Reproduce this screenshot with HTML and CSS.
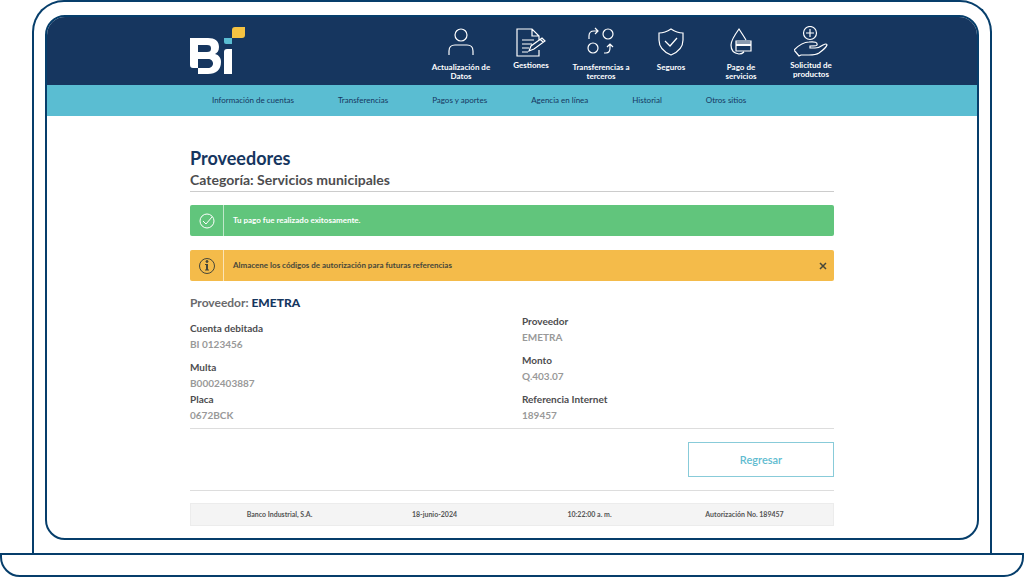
FILE: index.html
```html
<!DOCTYPE html>
<html lang="es">
<head>
<meta charset="utf-8">
<meta name="viewport" content="width=device-width, initial-scale=1">
<title>Proveedores</title>
<link rel="stylesheet" href="styles.css">
</head>
<body>
<div class="lid">
  <div class="screen">
    <header class="header">
      <div class="header-inner">
        <a class="logo" href="#" aria-label="Bi">
          <svg width="56" height="48" viewBox="0 0 56 48">
            <path fill="#fff" fill-rule="evenodd" d="M0 11H18C25 11 29 14 29 20C29 24 27 26 25 27C29 28 31 31 31 35C31 43 26 47 18 47H8V41H3Q0 41 0 38ZM8 18V25H17C20 25 21 24 21 21.500C21 19 20 18 17 18ZM8 32V41H18C21 41 23 39 23 36.500C23 34 21 32 18 32Z"/>
            <path fill="#fff" d="M37 22H42V47H34V25Q34 22 37 22Z"/>
            <path fill="#5abdd2" d="M34 11H42V17H36Q34 17 34 15Z"/>
            <path fill="#f5c342" d="M45 0H55V8Q55 11 52 11H42V3Q42 0 45 0Z"/>
          </svg>
        </a>
        <nav class="shortcuts" aria-label="Accesos">
          <a href="#" class="shortcut">
            <svg width="34" height="34" viewBox="0 0 34 34"><circle cx="17" cy="9" r="6"/><path d="M5 29V25Q5 19 11 19H23Q29 19 29 25V29"/></svg>
            <span>Actualización de Datos</span>
          </a>
          <a href="#" class="shortcut shortcut-high">
            <svg width="34" height="34" viewBox="0 0 34 34"><path d="M25 24V30H3V3H18L25 10V14M18 3V10H25M8 14H20M8 18H18M8 22H15M8 26H14M15 25L17 20L28 12L31 15L20 23Z M26 13L29 16"/></svg>
            <span>Gestiones</span>
          </a>
          <a href="#" class="shortcut">
            <svg width="34" height="34" viewBox="0 0 34 34"><circle cx="24" cy="8" r="5"/><circle cx="9" cy="22" r="5"/><path d="M5 13V10Q5 5 10 5H14M11 2L14 5L11 8M20 27H22Q26 27 26 22V18M23 21L26 18L29 21"/></svg>
            <span>Transferencias a terceros</span>
          </a>
          <a href="#" class="shortcut">
            <svg width="34" height="34" viewBox="0 0 34 34"><path d="M17 3Q23 7 29 7V14Q29 24 17 29Q5 24 5 14V7Q11 7 17 3ZM11 15L16 20L23 12"/></svg>
            <span>Seguros</span>
          </a>
          <a href="#" class="shortcut">
            <svg width="34" height="34" viewBox="0 0 34 34"><path d="M22 14Q19 9 15 3Q7 14 7 19Q7 27 15 28Q18 28 20 26M12 15H27V25H12ZM12 17H27"/><path class="stripe" d="M12 19H27"/></svg>
            <span>Pago de servicios</span>
          </a>
          <a href="#" class="shortcut shortcut-high">
            <svg width="34" height="34" viewBox="0 0 34 34"><circle cx="16" cy="7" r="6.500"/><path d="M16 3V11M12 7H20M0 24Q8 16 15 16Q24 15 23 19Q23 20 16 20V22H21Q25 22 29 19Q33 17 33 19Q32 22 25 27Q22 29 15 29H7L5 30Z"/></svg>
            <span>Solicitud de productos</span>
          </a>
        </nav>
      </div>
    </header>
    <nav class="menu" aria-label="Principal">
      <div class="menu-inner">
        <a href="#">Información de cuentas</a>
        <a href="#">Transferencias</a>
        <a href="#">Pagos y aportes</a>
        <a href="#">Agencia en línea</a>
        <a href="#">Historial</a>
        <a href="#">Otros sitios</a>
      </div>
    </nav>
    <main class="content">
      <h1 class="title">Proveedores</h1>
      <h2 class="subtitle">Categoría: Servicios municipales</h2>
      <div class="alert alert-success" role="status">
        <span class="alert-icon"><svg width="18" height="18" viewBox="0 0 18 18"><circle cx="9" cy="9" r="7"/><path d="M5 9L8 12L14 5"/></svg></span>
        <p class="alert-text">Tu pago fue realizado exitosamente.</p>
      </div>
      <div class="alert alert-warning" role="status">
        <span class="alert-icon"><svg width="18" height="18" viewBox="0 0 18 18"><circle cx="9" cy="9" r="7.5"/><path class="info-stem" d="M9 7V13"/><path d="M7 7.5H9M7 13H11"/><circle class="dot" cx="9" cy="4.5" r="1"/></svg></span>
        <p class="alert-text">Almacene los códigos de autorización para futuras referencias</p>
        <button class="close" type="button" aria-label="Cerrar"><svg width="8" height="8" viewBox="0 0 8 8"><path d="M1 1L7 7M7 1L1 7"/></svg></button>
      </div>
      <h3 class="provider">Proveedor: <strong>EMETRA</strong></h3>
      <div class="details">
        <dl class="detail-list">
          <div><dt>Cuenta debitada</dt><dd>BI 0123456</dd></div>
          <div><dt>Multa</dt><dd>B0002403887</dd><dt>Placa</dt><dd>0672BCK</dd></div>
        </dl>
        <dl class="detail-list">
          <div><dt>Proveedor</dt><dd>EMETRA</dd></div>
          <div><dt>Monto</dt><dd>Q.403.07</dd></div>
          <div><dt>Referencia Internet</dt><dd>189457</dd></div>
        </dl>
      </div>
      <div class="actions"><button class="back" type="button">Regresar</button></div>
      <footer class="summary">
        <span>Banco Industrial, S.A.</span>
        <span>18-junio-2024</span>
        <span>10:22:00 a. m.</span>
        <span>Autorización No. 189457</span>
      </footer>
    </main>
  </div>
</div>
<div class="base"></div>
</body>
</html>
```

FILE: styles.css
```css
* {
  box-sizing: border-box;
}

body {
  display: flex;
  flex-direction: column;
  min-height: 100vh;
  margin: 0;
  background: #fff;
  color: #4d4d4f;
  font-family: Lato, "Open Sans", sans-serif;
}

h1, h2, h3, p, dl, dd {
  margin: 0;
}

a {
  color: inherit;
  text-decoration: none;
}

svg {
  display: block;
  flex: none;
}

.lid {
  display: flex;
  flex: 1;
  margin: 0 32px;
  padding: 13px 11px;
  border: 2px solid #063e6b;
  border-bottom: 0;
  border-radius: 32px 32px 0 0;
}

.screen {
  flex: 1;
  overflow: hidden;
  border: 2px solid #063e6b;
  border-radius: 20px;
}

.base {
  height: 24px;
  border: 2px solid #063e6b;
  border-radius: 0 0 20px 20px;
}

.header {
  background: #16365f;
  color: #fff;
}

.header-inner {
  display: flex;
  justify-content: space-between;
  max-width: 668px;
  min-height: 68px;
  margin: 0 auto;
  padding-left: 12px;
}

.logo {
  padding-top: 10px;
}

.shortcuts {
  display: grid;
  grid-template-columns: repeat(6, 70px);
  padding-top: 9px;
}

.shortcut {
  display: flex;
  flex-direction: column;
  align-items: center;
  gap: 3px;
  padding: 0 5px;
  font-size: 8px;
  font-weight: 700;
  line-height: 9px;
  text-align: center;
}

.shortcut-high {
  gap: 1px;
}

.shortcut svg {
  fill: none;
  stroke: #fff;
  stroke-width: 1.2;
}

.shortcut .stripe {
  stroke-width: 2;
}

.menu {
  background: #5abdd2;
  color: #16365f;
}

.menu-inner {
  display: flex;
  gap: 44px;
  max-width: 644px;
  margin: 0 auto;
  padding-left: 22px;
  font-size: 8px;
  line-height: 31px;
  white-space: nowrap;
}

.content {
  max-width: 644px;
  margin: 0 auto;
  padding: 31px 0 12px;
}

.title {
  color: #16365f;
  font-size: 18px;
  line-height: 22px;
}

.subtitle {
  margin-bottom: 13px;
  border-bottom: 1px solid #ccc;
  font-size: 14px;
  line-height: 22px;
}

.alert {
  display: flex;
  height: 31px;
  margin-bottom: 14px;
  border-radius: 2px;
  font-size: 8px;
  font-weight: 700;
  line-height: 31px;
}

.alert-success {
  background: #61c57c;
  color: #fff;
}

.alert-warning {
  background: #f4bb4a;
  color: #46473a;
}

.alert-icon {
  display: flex;
  align-items: center;
  justify-content: center;
  width: 34px;
  border-right: 1px solid #fff9;
}

.alert svg {
  fill: none;
  stroke: currentColor;
  stroke-width: 1;
}

.alert .info-stem {
  stroke-width: 2;
}

.alert .dot {
  fill: currentColor;
}

.alert-text {
  flex: 1;
  padding-left: 9px;
}

.close {
  padding: 0 7px;
  border: 0;
  background: none;
  color: inherit;
}

.alert .close svg {
  stroke-width: 1.5;
}

.provider {
  color: #6a6a6c;
  font-size: 12px;
  line-height: 16px;
}

.provider strong {
  color: #16365f;
}

.details {
  display: grid;
  grid-template-columns: 1fr 1fr;
  align-items: end;
  gap: 20px;
  padding: 2px 0 5px;
  border-bottom: 1px solid #ddd;
  font-size: 10px;
  font-weight: 700;
  line-height: 16px;
}

.detail-list {
  display: grid;
  gap: 7px;
}

.detail-list dd {
  color: #999;
}

.actions {
  display: flex;
  justify-content: flex-end;
  padding: 13px 0;
  border-bottom: 1px solid #ddd;
}

.back {
  width: 146px;
  height: 35px;
  border: 1px solid #88cbd9;
  background: #fff;
  color: #5fbcd0;
  font: 600 11px Lato, "Open Sans", sans-serif;
}

.summary {
  display: grid;
  grid-template-columns: repeat(4, 1fr);
  margin-top: 12px;
  padding: 0 11px;
  border: 1px solid #ececec;
  background: #f4f4f4;
  color: #555;
  font-size: 7px;
  font-weight: 700;
  line-height: 21px;
  text-align: center;
}
```
